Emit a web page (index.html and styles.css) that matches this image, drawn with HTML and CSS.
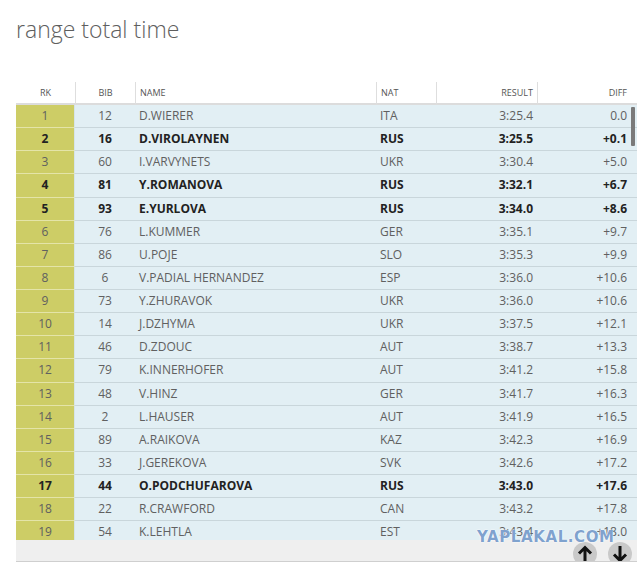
FILE: index.html
```html
<!DOCTYPE html>
<html>
<head>
<meta charset="utf-8">
<link rel="stylesheet" href="styles.css">
</head>
<body>
<h1 class="title">range total time</h1>
<div class="board">
  <table class="grid head">
    <colgroup><col class="c-rk"><col class="c-bib"><col class="c-name"><col class="c-nat"><col class="c-res"><col class="c-diff"></colgroup>
    <tr>
      <th class="rk">RK</th><th class="bib">BIB</th><th class="name">NAME</th><th class="nat">NAT</th><th class="res">RESULT</th><th class="diff">DIFF</th>
    </tr>
  </table>
  <div class="viewport">
    <table class="grid body">
      <colgroup><col class="c-rk"><col class="c-bib"><col class="c-name"><col class="c-nat"><col class="c-res"><col class="c-diff"></colgroup>
      <tr><td class="rk">1</td><td class="bib">12</td><td class="name">D.WIERER</td><td class="nat">ITA</td><td class="res">3:25.4</td><td class="diff">0.0</td></tr>
      <tr class="hl"><td class="rk">2</td><td class="bib">16</td><td class="name">D.VIROLAYNEN</td><td class="nat">RUS</td><td class="res">3:25.5</td><td class="diff">+0.1</td></tr>
      <tr><td class="rk">3</td><td class="bib">60</td><td class="name">I.VARVYNETS</td><td class="nat">UKR</td><td class="res">3:30.4</td><td class="diff">+5.0</td></tr>
      <tr class="hl"><td class="rk">4</td><td class="bib">81</td><td class="name">Y.ROMANOVA</td><td class="nat">RUS</td><td class="res">3:32.1</td><td class="diff">+6.7</td></tr>
      <tr class="hl"><td class="rk">5</td><td class="bib">93</td><td class="name">E.YURLOVA</td><td class="nat">RUS</td><td class="res">3:34.0</td><td class="diff">+8.6</td></tr>
      <tr><td class="rk">6</td><td class="bib">76</td><td class="name">L.KUMMER</td><td class="nat">GER</td><td class="res">3:35.1</td><td class="diff">+9.7</td></tr>
      <tr><td class="rk">7</td><td class="bib">86</td><td class="name">U.POJE</td><td class="nat">SLO</td><td class="res">3:35.3</td><td class="diff">+9.9</td></tr>
      <tr><td class="rk">8</td><td class="bib">6</td><td class="name">V.PADIAL HERNANDEZ</td><td class="nat">ESP</td><td class="res">3:36.0</td><td class="diff">+10.6</td></tr>
      <tr><td class="rk">9</td><td class="bib">73</td><td class="name">Y.ZHURAVOK</td><td class="nat">UKR</td><td class="res">3:36.0</td><td class="diff">+10.6</td></tr>
      <tr><td class="rk">10</td><td class="bib">14</td><td class="name">J.DZHYMA</td><td class="nat">UKR</td><td class="res">3:37.5</td><td class="diff">+12.1</td></tr>
      <tr><td class="rk">11</td><td class="bib">46</td><td class="name">D.ZDOUC</td><td class="nat">AUT</td><td class="res">3:38.7</td><td class="diff">+13.3</td></tr>
      <tr><td class="rk">12</td><td class="bib">79</td><td class="name">K.INNERHOFER</td><td class="nat">AUT</td><td class="res">3:41.2</td><td class="diff">+15.8</td></tr>
      <tr><td class="rk">13</td><td class="bib">48</td><td class="name">V.HINZ</td><td class="nat">GER</td><td class="res">3:41.7</td><td class="diff">+16.3</td></tr>
      <tr><td class="rk">14</td><td class="bib">2</td><td class="name">L.HAUSER</td><td class="nat">AUT</td><td class="res">3:41.9</td><td class="diff">+16.5</td></tr>
      <tr><td class="rk">15</td><td class="bib">89</td><td class="name">A.RAIKOVA</td><td class="nat">KAZ</td><td class="res">3:42.3</td><td class="diff">+16.9</td></tr>
      <tr><td class="rk">16</td><td class="bib">33</td><td class="name">J.GEREKOVA</td><td class="nat">SVK</td><td class="res">3:42.6</td><td class="diff">+17.2</td></tr>
      <tr class="hl"><td class="rk">17</td><td class="bib">44</td><td class="name">O.PODCHUFAROVA</td><td class="nat">RUS</td><td class="res">3:43.0</td><td class="diff">+17.6</td></tr>
      <tr><td class="rk">18</td><td class="bib">22</td><td class="name">R.CRAWFORD</td><td class="nat">CAN</td><td class="res">3:43.2</td><td class="diff">+17.8</td></tr>
      <tr><td class="rk">19</td><td class="bib">54</td><td class="name">K.LEHTLA</td><td class="nat">EST</td><td class="res">3:43.4</td><td class="diff">+18.0</td></tr>
    </table>
    <div class="thumb"></div>
  </div>
  <div class="footer">
    <span class="navbtn"><svg width="24" height="24" viewBox="0 0 24 24"><path d="M12 20V6M6 11.5L12 5.5L18 11.5" fill="none" stroke="#111" stroke-width="3" stroke-linecap="butt" stroke-linejoin="miter"/></svg></span>
    <span class="navbtn"><svg width="24" height="24" viewBox="0 0 24 24"><path d="M12 4V18M6 12.5L12 18.5L18 12.5" fill="none" stroke="#111" stroke-width="3" stroke-linecap="butt" stroke-linejoin="miter"/></svg></span>
  </div>
  <div class="watermark">YAPLAKAL.COM</div>
</div>
</body>
</html>
```

FILE: styles.css
```css
html, body {
  margin: 0;
  padding: 0;
  background: #ffffff;
}
body {
  font-family: "Open Sans", "Noto Sans", sans-serif;
  color: #555;
}
.title {
  margin: 0;
  padding: 14px 0 0 16px;
  font-family: "Open Sans", sans-serif;
  font-weight: 300;
  font-size: 23px;
  line-height: 31px;
  color: #5e5e5e;
}
.board {
  position: relative;
  margin: 37px 0 0 16px;
  width: 621px;
}
.grid {
  width: 621px;
  table-layout: fixed;
  border-collapse: separate;
  border-spacing: 0;
}
.c-rk { width: 59px; }
.c-bib { width: 60px; }
.c-name { width: 241px; }
.c-nat { width: 60px; }
.c-res { width: 101px; }
.c-diff { width: 100px; }

.head th {
  height: 21px;
  padding: 0 4px;
  font-size: 9px;
  font-weight: 400;
  color: #555;
  border-left: 1px solid #dedede;
  border-bottom: 2px solid #dcdcdc;
  vertical-align: middle;
}
.head th:first-child { border-left: none; }
.head th.rk, .head th.bib { text-align: center; }
.head th.name, .head th.nat { text-align: left; }
.head th.res, .head th.diff { text-align: right; }
.head th.diff { padding-right: 10px; }

.viewport {
  position: relative;
  height: 435px;
  overflow: hidden;
}
.body td {
  height: 22.125px;
  padding: 0 4px;
  font-size: 12px;
  color: #606060;
  background: #e2eff4;
  border-bottom: 1px solid #c9d6db;
  white-space: nowrap;
  vertical-align: middle;
  line-height: 22px;
}
.body td.rk {
  background: #cdcd66;
  border-bottom-color: #e4e4a8;
  text-align: center;
  border-right: 1px solid #d6e4ea;
}
.body td.bib { text-align: center; }
.body td.name, .body td.nat { text-align: left; }
.body td.res, .body td.diff { text-align: right; }
.body td.diff { padding-right: 10px; }
.body tr.hl td {
  font-weight: 700;
  color: #222;
}
.thumb {
  position: absolute;
  right: 2px;
  top: 2px;
  width: 4px;
  height: 39px;
  background: #7a7a7a;
  border-radius: 1px;
}
.footer {
  height: 21px;
  background: #efefef;
  border-bottom: 1px solid #cfcfcf;
  display: flex;
  justify-content: flex-end;
  align-items: flex-start;
  gap: 11px;
  padding-right: 5px;
  overflow: hidden;
}
.navbtn {
  margin-top: 2px;
  width: 24px;
  height: 24px;
  border-radius: 50%;
  background: #c9c9c9;
  display: flex;
  align-items: center;
  justify-content: center;
}
.navbtn svg {
  display: block;
}
.watermark {
  position: absolute;
  left: 461px;
  top: 446px;
  font-family: "DejaVu Sans", sans-serif;
  font-weight: 700;
  font-size: 15px;
  letter-spacing: 0.6px;
  color: rgba(70, 120, 185, 0.7);
  text-shadow: 0 0 2px #fff, 0 0 1px #fff;
}
```
